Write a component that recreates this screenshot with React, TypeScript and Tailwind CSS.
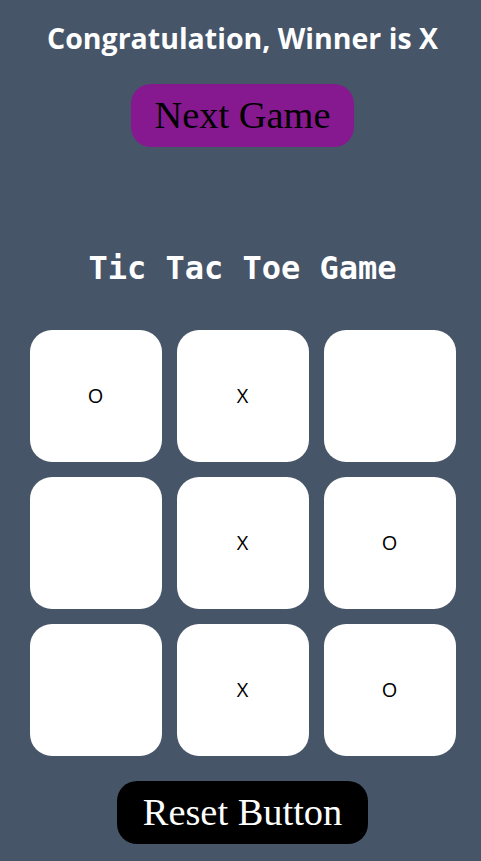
export default function App() {
  const board = ["O", "X", "", "", "X", "O", "", "X", "O"];
  return (
    <div className="min-h-[861px] w-full bg-[#475569] flex flex-col items-center pl-[4px]">
      <h1 className="mt-[22px] text-[28.5px] leading-[32px] font-bold text-white [font-family:'Open_Sans',sans-serif]">
        Congratulation, Winner is X
      </h1>
      <button className="mt-[30px] h-[63px] px-[24px] rounded-[20px] bg-[#86198f] text-black text-[38.4px] leading-none [font-family:'Liberation_Serif',serif]">
        Next Game
      </button>
      <h2 className="mt-[101px] text-[32px] leading-[40px] font-bold text-white [font-family:'DejaVu_Sans_Mono',monospace]">
        Tic Tac Toe Game
      </h2>
      <div className="mt-[42px] grid grid-cols-3 gap-[15px]">
        {board.map((v, i) => (
          <div
            key={i}
            className="w-[132px] h-[132px] bg-white rounded-[22px] flex items-center justify-center text-[20px] text-black [font-family:'Open_Sans',sans-serif]"
          >
            {v}
          </div>
        ))}
      </div>
      <button className="mt-[25px] h-[63px] px-[26px] rounded-[20px] bg-black text-white text-[38.4px] leading-none [font-family:'Liberation_Serif',serif]">
        Reset Button
      </button>
    </div>
  );
}
